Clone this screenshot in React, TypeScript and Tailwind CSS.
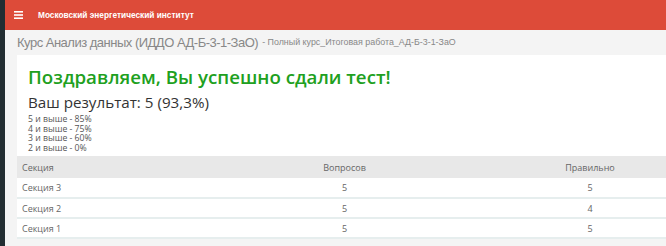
export default function App() {
  const rows = [
    { name: "Секция 3", q: 5, ok: 5 },
    { name: "Секция 2", q: 5, ok: 4 },
    { name: "Секция 1", q: 5, ok: 5 },
  ];
  return (
    <div className="flex h-[246px] w-[666px] overflow-hidden bg-[#f4f4f4] font-['Open_Sans',sans-serif]">
      {/* sidebar edge */}
      <div className="w-[5px] shrink-0 bg-[#222d32]" />
      <div className="flex min-w-0 flex-1 flex-col">
        <header className="flex h-[30px] shrink-0 items-center bg-[#dd4b39] text-white">
          <svg width="9" height="8" viewBox="0 0 9 8" className="ml-[9px]">
            <rect x="0" y="0" width="9" height="1.6" fill="#fff" />
            <rect x="0" y="3.2" width="9" height="1.6" fill="#fff" />
            <rect x="0" y="6.4" width="9" height="1.6" fill="#fff" />
          </svg>
          <span className="ml-[15px] font-['Liberation_Sans',sans-serif] text-[8.3px] font-bold">
            Московский энергетический институт
          </span>
        </header>
        <div className="flex h-[25px] shrink-0 items-center whitespace-nowrap pl-[12px] font-['Liberation_Sans',sans-serif] text-[#888]">
          <span className="text-[13px] leading-none tracking-[-0.5px]">Курс Анализ данных (ИДДО АД-Б-3-1-ЗаО)</span>
          <span className="ml-[4px] text-[8.9px] leading-none">- Полный курс_Итоговая работа_АД-Б-3-1-ЗаО</span>
        </div>
        <div className="ml-[12px] flex flex-1 flex-col bg-white pt-[9px]">
          <h1 className="pl-[11px] text-[18.7px] font-semibold leading-[26px] text-[#20a020]">
            Поздравляем, Вы успешно сдали тест!
          </h1>
          <div className="mt-[3px] pl-[11px] text-[15.2px] leading-[18px] text-[#333]">
            Ваш результат: 5 (93,3%)
          </div>
          <div className="mt-[4px] pl-[11px] text-[8.7px] leading-[9.6px] text-[#555]">
            <div>5 и выше - 85%</div>
            <div>4 и выше - 75%</div>
            <div>3 и выше - 60%</div>
            <div>2 и выше - 0%</div>
          </div>
          <table className="mt-[3px] w-[700px] table-fixed border-collapse text-[9px] text-[#666]">
            <colgroup>
              <col className="w-[205px]" />
              <col className="w-[245px]" />
              <col className="w-[250px]" />
            </colgroup>
            <thead>
              <tr className="h-[22px] bg-[#e8e8e8]">
                <th className="pl-[5px] text-left font-normal">Секция</th>
                <th className="text-center font-normal">Вопросов</th>
                <th className="pr-[4px] text-center font-normal">Правильно</th>
              </tr>
            </thead>
            <tbody>
              {rows.map((r) => (
                <tr key={r.name} className="h-[20px] border-b-2 border-[#e6eeee]">
                  <td className="pl-[5px]">{r.name}</td>
                  <td className="text-center">{r.q}</td>
                  <td className="pr-[4px] text-center">{r.ok}</td>
                </tr>
              ))}
            </tbody>
          </table>
          <div className="mt-auto h-[8px] bg-[#f4f4f4]" />
        </div>
      </div>
    </div>
  );
}
